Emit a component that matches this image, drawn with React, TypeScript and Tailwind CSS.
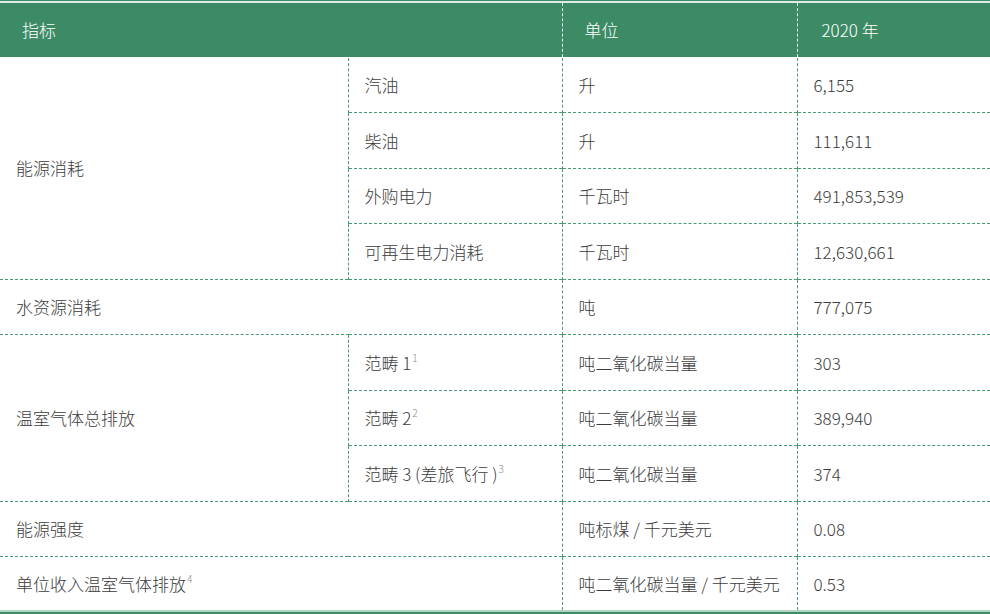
import React from 'react';

const font = { fontFamily: '"Noto Sans CJK SC", "Noto Sans", sans-serif' };

type Row = {
  group?: string;
  span?: number;
  name?: React.ReactNode;
  full?: React.ReactNode;
  unit: string;
  value: string;
};

const Sup = ({ n }: { n: string }) => (
  <span className="ml-px text-[10px] text-[#888] relative -top-[8px]">{n}</span>
);

const rows: Row[] = [
  { group: '能源消耗', span: 4, name: '汽油', unit: '升', value: '6,155' },
  { name: '柴油', unit: '升', value: '111,611' },
  { name: '外购电力', unit: '千瓦时', value: '491,853,539' },
  { name: '可再生电力消耗', unit: '千瓦时', value: '12,630,661' },
  { full: '水资源消耗', unit: '吨', value: '777,075' },
  { group: '温室气体总排放', span: 3, name: <>范畴 1<Sup n="1" /></>, unit: '吨二氧化碳当量', value: '303' },
  { name: <>范畴 2<Sup n="2" /></>, unit: '吨二氧化碳当量', value: '389,940' },
  { name: <>范畴 3 (差旅飞行 )<Sup n="3" /></>, unit: '吨二氧化碳当量', value: '374' },
  { full: '能源强度', unit: '吨标煤 / 千元美元', value: '0.08' },
  { full: <>单位收入温室气体排放<Sup n="4" /></>, unit: '吨二氧化碳当量 / 千元美元', value: '0.53' },
];

const td = 'pl-4 align-middle border-dashed border-[#4a9a72]';

export default function App() {
  return (
    <div className="w-[990px] h-[614px] bg-white text-[17px] font-light text-[#3c3c3c]" style={font}>
      <div className="h-px bg-[#3d8b65]" />
      <div className="h-[2px] bg-[#dfece5]" />
      <table className="w-full border-collapse table-fixed">
        <colgroup>
          <col className="w-[348px]" />
          <col className="w-[214px]" />
          <col className="w-[235px]" />
          <col className="w-[193px]" />
        </colgroup>
        <thead>
          <tr className="h-[54px] bg-[#3d8b65] text-white">
            <th colSpan={2} className="pl-[22px] text-left font-light border-b border-dashed border-white/90">
              指标
            </th>
            <th className="pl-[22px] text-left font-light border-b border-l border-dashed border-white/90">
              单位
            </th>
            <th className="pl-[24px] text-left font-light border-b border-l border-dashed border-white/90">
              2020 年
            </th>
          </tr>
        </thead>
        <tbody>
          {rows.map((r, i) => (
            <tr key={i} className={i === rows.length - 1 ? 'h-[53px]' : 'h-[55.5px]'}>
              {r.group && (
                <td rowSpan={r.span} className={`${td} ${i === 0 ? '' : 'border-t'}`}>
                  {r.group}
                </td>
              )}
              {r.full ? (
                <td colSpan={2} className={`${td} border-t`}>
                  {r.full}
                </td>
              ) : (
                <td className={`${td} ${i === 0 ? '' : 'border-t'} border-l`}>{r.name}</td>
              )}
              <td className={`${td} ${i === 0 ? '' : 'border-t'} border-l`}>{r.unit}</td>
              <td className={`${td} ${i === 0 ? '' : 'border-t'} border-l`}>{r.value}</td>
            </tr>
          ))}
        </tbody>
      </table>
      <div className="h-[2px] bg-[#b3d4c3]" />
      <div className="h-[3px] bg-[#3d8b65]" />
    </div>
  );
}
